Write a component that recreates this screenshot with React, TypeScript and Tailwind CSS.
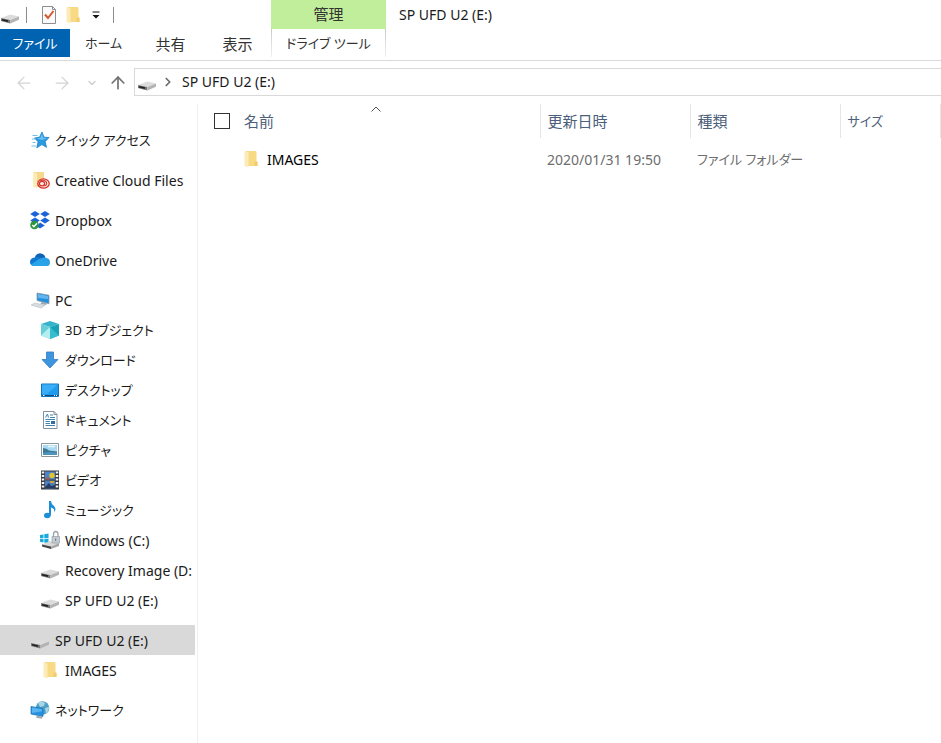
import React from "react";
import { LuArrowLeft, LuArrowRight, LuArrowUp, LuChevronDown, LuChevronRight } from "react-icons/lu";

const DriveShape = () => (
  <>
    <path d="M1 13 9.500 9.700q1-.3 2 0L19 11.500l-8.600 3.500z" fill="#dcdcdc" />
    <path d="m1 13 9.400 2v3.500L1.600 16.200q-.6-.2-.6-.8z" fill="#7a7a7a" />
    <path d="M10.400 15 19 11.500v2.800q0 .6-.6.8l-8 3.400z" fill="#b4b4b4" />
    <path d="m2 14.700 6 1.400" stroke="#222" strokeWidth="1.600" />
  </>
);

const FolderShape = () => (
  <>
    <path d="M5 2h9.500q1 0 1 1v9.500l1 1v3.500H6z" fill="#f8da84" />
    <path d="m3.500 2 4 1.500V18.500l-4-1.500z" fill="#fcebb8" />
    <path d="M13.500 12.500h3V17h-3z" fill="#f1cc70" />
  </>
);

function Icon({ name }: { name: string }) {
  return (
    <svg viewBox="0 0 20 20" className="w-5 h-5 shrink-0" fill="none" aria-hidden="true">
      {name == "drive" && <DriveShape />}
      {name == "folder" && <FolderShape />}
      {name == "quick" && (
        <>
          <path d="m12 2 2 5.200 5 .3-3.800 4.100 1.300 5.700-4.700-2.700-5 3.200 1.300-6L4.500 8l5-.8z" fill="#2a9be0" stroke="#1b7fc4" strokeWidth=".8" />
          <path d="m12 3.800 1.300 4 3.700.4-5.200 1.900L6.500 8.300l3.800-.5z" fill="#68c0f2" />
          <path d="M2.500 5.500h5M2 9h4M2.500 12.500h3M1.500 16h4.500" stroke="#74bfea" strokeWidth="1" />
        </>
      )}
      {name == "cc" && (
        <>
          <path d="M3 2h11v15H3z" fill="#f6d98c" />
          <path d="m3 2 4 1.500v14.500L3 17z" fill="#fdebb8" />
          <ellipse cx="13.500" cy="13.500" rx="5.700" ry="4.700" fill="#fbeee5" stroke="#d5342b" strokeWidth="1.300" />
          <ellipse cx="12" cy="13.600" rx="2.600" ry="2.300" stroke="#d5342b" strokeWidth="1.200" />
          <path d="M10 11.200q3-2 5.600 0 2.400 3-.6 4.600h-2" stroke="#d5342b" strokeWidth="1.100" />
        </>
      )}
      {name == "dropbox" && (
        <>
          <path d="m5 1 4.800 3L5 7 .2 4zM15 1l4.800 3L15 7l-4.800-3zM5 7.500l4.800 3-4.800 3-4.800-3zM15 7.500l4.800 3-4.800 3-4.800-3zM10 12.500l4.800 3-4.800 3-3-2z" fill="#1b63d8" />
          <circle cx="4.500" cy="15" r="4.300" fill="#2d9440" />
          <path d="m2.300 15 1.600 1.700L7 13.200" stroke="#fff" strokeWidth="1.400" />
        </>
      )}
      {name == "onedrive" && (
        <>
          <path d="M4.500 8.500Q5.500 3.500 10 3.300q4 0 5.400 4l-3 4-8-2z" fill="#0f62b5" />
          <path d="M4.800 7.500Q0 8.200 0 12t4.500 4h4l5.500-6.500q-5-4-9.200-2z" fill="#1278ce" />
          <path d="M9 9.500q3.500-3 7-1.700 4 .9 4 4.600 0 3.600-3.600 3.600H4.500z" fill="#2aa0e6" />
          <path d="m9.500 8.700 9 6q-1 1.300-2.500 1.300H4.500q-2.500-.3-3.600-1.500z" fill="#29a3ea" />
        </>
      )}
      {name == "pc" && (
        <>
          <path d="m7 3 12 2.200v8.600L7 10.500z" fill="#2490dc" stroke="#8a9cab" strokeWidth=".8" />
          <path d="m8 4 10 2v3L8 8z" fill="#63b5ee" />
          <path d="m11.500 12-1 2 6 1v-2z" fill="#9ba7b0" />
          <path d="m1 15 4-2 10 2.300-4 2.700z" fill="#d8dde1" stroke="#aab4bc" strokeWidth=".5" />
        </>
      )}
      {name == "3d" && (
        <>
          <path d="m10 1 9 3-9 3-9-3z" fill="#35b3ca" />
          <path d="m1 4 9 3v12l-9-3.500z" fill="#65ced8" />
          <path d="m1 15.500 9-8.500v12z" fill="#b4eef0" />
          <path d="m10 7 9-3v11.500L10 19z" fill="#17a2b8" />
          <path d="m10 19 9-3.500L10 7z" fill="#35bccd" />
        </>
      )}
      {name == "download" && (
        <path d="M6.500 2h7v7.500H18l-8 8.500-8-8.500h4.500z" fill="#3e94de" stroke="#2e7cc5" strokeWidth=".8" />
      )}
      {name == "desktop" && (
        <>
          <path d="M1.500 4h17v12.500h-17z" fill="#1f9bed" stroke="#1173ba" />
          <path d="M2 4.500h16L7 14H2z" fill="#39adf5" />
          <path d="M2 15.500h16" stroke="#0c4d83" />
          <path d="M3 15.500h1.500M14 15.500h1M16 15.500h1" stroke="#fff" />
        </>
      )}
      {name == "document" && (
        <>
          <path d="M3.500 1.500H14l3 3v14H3.500z" fill="#fff" stroke="#84919b" />
          <path d="M14 1.500v3h3" stroke="#84919b" />
          <path d="m5.500 7.500 2-3.500 1 3.500M10 5h3M10 7.500h5M5.500 9.500H15M5.500 11.500H10M5.500 13.500H10M5.500 15.500H15" stroke="#3f84b3" />
          <path d="M11 11h4v3h-4z" fill="#2e6fa3" />
        </>
      )}
      {name == "picture" && (
        <>
          <path d="M1.500 3.500h17v13h-17z" fill="#fff" stroke="#8d969d" />
          <path d="M3 5h14v10H3z" fill="#a9daf3" />
          <path d="M3 8q4 0 6 2.500l8 1v3.500H3z" fill="#3c7a96" />
          <path d="M3 13q7-1.500 14-.5V15H3z" fill="#4d94bd" />
          <path d="M8 6.500h7" stroke="#e9f7fd" strokeWidth="1.500" />
        </>
      )}
      {name == "video" && (
        <>
          <path d="M1 .5h18v19H1z" fill="#3b3b3b" />
          <path d="M5 1.500h10v8H5z" fill="#4b83cd" />
          <path d="M5 10.500h10v8H5z" fill="#4b7fc4" />
          <path d="M3 1.500v17.500M17 1.500v17.500" stroke="#f4f4f4" strokeWidth="2.500" strokeDasharray="2 1.500" />
          <circle cx="12" cy="5.500" r="2.700" fill="#dfc52f" />
          <path d="M6 9q1-3 3.500-1v1.500H6z" fill="#c3502f" />
          <path d="m5 17 4-4 2 3 4-1v3.500H5z" fill="#263c60" />
          <path d="M10 11h4v2h-4z" fill="#d0a338" />
        </>
      )}
      {name == "music" && (
        <>
          <ellipse cx="7.300" cy="15.500" rx="3.300" ry="2.800" fill="#1d8fd6" />
          <path d="M9 1h2q.3 3 2.500 4.500 3.500 3 .8 7 .8-4-3.300-5V15.500H9z" fill="#1d8fd6" />
        </>
      )}
      {name == "windows" && (
        <>
          <path d="m0 5 3.500-.6V8H0zM4.300 4.300 8.500 3.500V8H4.300zM0 8.800h3.500v3.600L0 11.800zM4.300 8.800h4.200v4.500l-4.200-.8z" fill="#17a8dd" />
          <path d="M2 14.500 10 11l9 2-8 3.500z" fill="#d9d9d9" />
          <path d="m2 14.500 9 2v2.500l-9-2.500z" fill="#444" />
          <path d="m11 16.500 8-3.500v3L11 19z" fill="#a7a7a7" />
          <path d="M13.500 7V4q0-2.500 2.200-2.500T18 4v3" stroke="#9aa3aa" strokeWidth="1.300" />
          <path d="M12 6.500h7.500V13H12z" fill="#c3ccd3" stroke="#939da5" strokeWidth=".7" />
          <path d="M15.700 8.500v2.500" stroke="#68737c" />
        </>
      )}
      {name == "network" && (
        <>
          <circle cx="12.500" cy="8" r="6.800" fill="#4f9fc8" />
          <path d="M8 3q4-3 7 0l-1 3-4 1zM15 8l4-1q0 4-3 6.500z" fill="#a9d5e4" />
          <path d="m1 6.500 12 2v8L1 14z" fill="#2492e0" stroke="#1b70b4" strokeWidth=".7" />
          <path d="m2 7.500 10 1.700v2L2 13z" fill="#59b4f2" />
          <path d="m7 15.500-1 2.300 6 1 .5-2z" fill="#9daab4" />
        </>
      )}
    </svg>
  );
}

const tree = [
  { icon: "quick", label: "クイック アクセス", kana: true },
  { icon: "cc", label: "Creative Cloud Files" },
  { icon: "dropbox", label: "Dropbox" },
  { icon: "onedrive", label: "OneDrive" },
  {
    icon: "pc",
    label: "PC",
    items: [
      { icon: "3d", label: "3D オブジェクト", kana: true },
      { icon: "download", label: "ダウンロード", kana: true },
      { icon: "desktop", label: "デスクトップ", kana: true },
      { icon: "document", label: "ドキュメント", kana: true },
      { icon: "picture", label: "ピクチャ", kana: true },
      { icon: "video", label: "ビデオ", kana: true },
      { icon: "music", label: "ミュージック", kana: true },
      { icon: "windows", label: "Windows (C:)" },
      { icon: "drive", label: "Recovery Image (D:" },
      { icon: "drive", label: "SP UFD U2 (E:)" },
    ],
  },
  {
    icon: "drive",
    label: "SP UFD U2 (E:)",
    active: true,
    items: [{ icon: "folder", label: "IMAGES" }],
  },
  { icon: "network", label: "ネットワーク", kana: true },
];

function TreeLink({ item, child }: any) {
  return (
    <a
      href="#"
      className={`flex items-center gap-[5px] h-[30px] whitespace-nowrap ${child ? "pl-10" : "pl-[30px]"} ${item.active ? "bg-[#d9d9d9]" : ""}`}
    >
      <Icon name={item.icon} />
      <span className={item.kana ? "text-[13px]" : "pt-[2px]"}>{item.label}</span>
    </a>
  );
}

function Sidebar() {
  return (
    <nav className="w-[198px] shrink-0 pt-[21px] pr-[2px] border-r border-[#f0f0f0]">
      <ul className="flex flex-col gap-[10px]">
        {tree.map((item: any, index: number) => (
          <li key={`tree_${index}`}>
            <TreeLink item={item} />
            {item.items && (
              <ul>
                {item.items.map((sub: any, i: number) => (
                  <li key={`sub_${i}`}>
                    <TreeLink item={sub} child />
                  </li>
                ))}
              </ul>
            )}
          </li>
        ))}
      </ul>
    </nav>
  );
}

function Ribbon() {
  return (
    <header className="flex h-[61px] border-b border-[#d9dadb]">
      <div className="w-[271px] shrink-0">
        <div className="flex items-center h-[29px]">
          <Icon name="drive" />
          <span className="w-px h-4 ml-[6px] bg-[#8c8c8c]" />
          <button type="button" aria-label="プロパティ" className="ml-3">
            <svg viewBox="0 0 20 20" className="w-5 h-5" fill="none">
              <path d="M3.500 1.500h10l3 3v14h-13z" fill="#fafafa" stroke="#8b8f93" />
              <path d="M13.500 1.500v3h3" stroke="#8b8f93" />
              <path d="m6 9.500 3 3.500 5.500-7" stroke="#d4562c" strokeWidth="2" />
            </svg>
          </button>
          <button type="button" aria-label="新しいフォルダー" className="ml-1">
            <Icon name="folder" />
          </button>
          <button type="button" aria-label="カスタマイズ" className="ml-2">
            <svg viewBox="0 0 10 10" className="w-[10px] h-[10px]">
              <path d="M1.500 1.500h7v1h-7zM1.500 5h7L5 8.500z" fill="#111" />
            </svg>
          </button>
          <span className="w-px h-4 ml-3 bg-[#8c8c8c]" />
        </div>
        <div className="flex h-7 text-[13px] text-[#333]">
          <button type="button" className="w-[70px] bg-[#0063b1] text-white">ファイル</button>
          <button type="button" className="w-[67px]">ホーム</button>
          <button type="button" className="w-[67px] pt-[2px] text-[15px]">共有</button>
          <button type="button" className="w-[67px] pt-[2px] text-[15px]">表示</button>
        </div>
      </div>
      <div className="w-[115px] shrink-0 text-[#333]">
        <div className="flex items-center justify-center h-[29px] pb-[2px] bg-[#c0ee9b] text-[15px]">管理</div>
        <button
          type="button"
          className="w-full h-7 text-[13px] border-x [border-image:linear-gradient(#c8c8c8,#f4f4f4)_1]"
        >
          ドライブ ツール
        </button>
      </div>
      <h1 className="flex items-center h-[29px] pl-[13px]">SP UFD U2 (E:)</h1>
    </header>
  );
}

function AddressBar() {
  return (
    <div className="flex items-center h-[41px] mb-[2px]">
      <button type="button" aria-label="戻る" className="pt-[2px] ml-[14px]">
        <LuArrowLeft size={20} strokeWidth={1.5} color="#d4d4d4" />
      </button>
      <button type="button" aria-label="進む" className="pt-[2px] ml-[18px]">
        <LuArrowRight size={20} strokeWidth={1.5} color="#d4d4d4" />
      </button>
      <button type="button" aria-label="履歴" className="pt-[2px] ml-[14px]">
        <LuChevronDown size={12} strokeWidth={3} color="#cfcfcf" />
      </button>
      <button type="button" aria-label="上へ" className="pt-[2px] ml-[10px]">
        <LuArrowUp size={20} color="#707070" />
      </button>
      <div className="flex flex-1 items-center h-7 ml-[6px] border border-r-0 border-[#d9d9d9]">
        <span className="ml-[2px]">
          <Icon name="drive" />
        </span>
        <LuChevronRight size={14} strokeWidth={3} color="#6b6b6b" className="ml-1" />
        <a href="#" className="ml-[7px]">SP UFD U2 (E:)</a>
      </div>
    </div>
  );
}

function FileList() {
  return (
    <main className="flex-1 min-w-0 overflow-hidden">
      <table className="w-[742px] table-fixed text-left whitespace-nowrap">
        <colgroup>
          <col className="w-[342px]" />
          <col className="w-[150px]" />
          <col className="w-[150px]" />
          <col className="w-[100px]" />
        </colgroup>
        <thead className="text-[#4c607a] text-[15px]">
          <tr className="h-[34px]">
            <th className="relative p-0 pl-4 font-normal border-r border-[#e5e5e5]">
              <label className="flex items-center gap-[14px]">
                <input type="checkbox" className="appearance-none w-4 h-4 border border-[#333] bg-white" />
                名前
              </label>
              <svg viewBox="0 0 10 6" className="absolute top-[2px] left-[173px] w-[10px] h-[6px]" fill="none">
                <path d="M.5 5.500 5 1l4.500 4.500" stroke="#555" />
              </svg>
            </th>
            <th className="p-0 pl-[7px] font-normal border-r border-[#e5e5e5]">更新日時</th>
            <th className="p-0 pl-[7px] font-normal border-r border-[#e5e5e5]">種類</th>
            <th className="p-0 pl-[7px] font-normal text-[13px] border-r border-[#e5e5e5]">サイズ</th>
          </tr>
        </thead>
        <tbody className="text-[#6d6d6d]">
          <tr className="h-[42px]">
            <td className="p-0 pl-[43px]">
              <a href="#" className="flex items-center gap-[6px] text-black">
                <Icon name="folder" />
                <span className="pt-[2px]">IMAGES</span>
              </a>
            </td>
            <td className="p-0 pt-[2px] pl-[7px]">2020/01/31 19:50</td>
            <td className="p-0 pl-[7px] text-[13px]">ファイル フォルダー</td>
            <td className="p-0" />
          </tr>
        </tbody>
      </table>
    </main>
  );
}

export default function App() {
  return (
    <div className="flex flex-col min-h-screen bg-white text-[#1a1a1a] text-[14px] leading-5 font-['Noto_Sans','Noto_Sans_CJK_JP',sans-serif] [font-feature-settings:'palt']">
      <Ribbon />
      <AddressBar />
      <div className="flex flex-1">
        <Sidebar />
        <FileList />
      </div>
    </div>
  );
}
